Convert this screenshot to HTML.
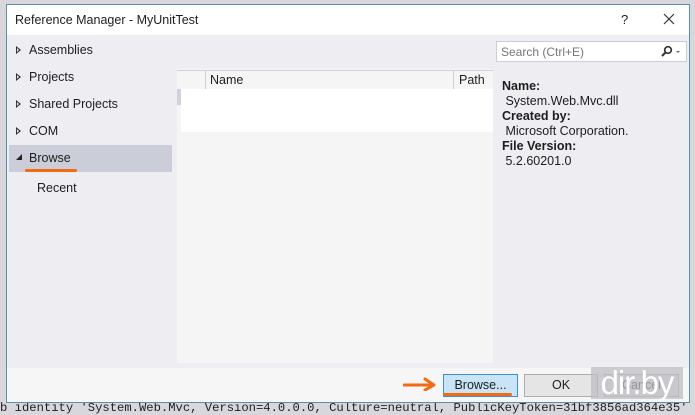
<!DOCTYPE html>
<html><head><style>
*{margin:0;padding:0;box-sizing:border-box}
body{width:695px;height:407px;overflow:hidden;background:#d8d8dc;font-family:"Liberation Sans",sans-serif;font-size:12px;color:#1e1e1e;position:relative}
.abs{position:absolute}
#dlg{left:6px;top:4px;width:684px;height:399px;border:1px solid #5b8fae;background:#ededf2}
#title{left:0;top:0;width:682px;height:30px;background:#fff}
.nav{left:22px;font-size:12.5px}
.tri{position:absolute;left:-13px;top:3px;width:0;height:0;border-top:4px solid transparent;border-bottom:4px solid transparent;border-left:5px solid #333}
.tri:after{content:"";position:absolute;left:-4px;top:-2px;border-top:2px solid transparent;border-bottom:2px solid transparent;border-left:2.5px solid #ededf2}
</style></head><body>
<div class="abs" style="left:0;top:401px;font-family:'Liberation Mono',monospace;font-size:12.2px;white-space:nowrap;line-height:14px">b identity 'System.Web.Mvc, Version=4.0.0.0, Culture=neutral, PublicKeyToken=31bf3856ad364e35'</div>
<div id="dlg" class="abs">
 <div id="title" class="abs"></div>
 <div class="abs" style="left:8px;top:8px;font-size:12.5px">Reference Manager - MyUnitTest</div>
 <div class="abs" style="left:614px;top:7px;font-size:13px">?</div>
 <svg class="abs" style="left:656px;top:8px" width="12" height="12"><path d="M1 1L11 11M11 1L1 11" stroke="#333" stroke-width="1.2"/></svg>
 <div class="abs nav" style="top:38px"><span class="tri"></span>Assemblies</div>
 <div class="abs nav" style="top:65px"><span class="tri"></span>Projects</div>
 <div class="abs nav" style="top:92px"><span class="tri"></span>Shared Projects</div>
 <div class="abs nav" style="top:119px"><span class="tri"></span>COM</div>
 <div class="abs" style="left:2px;top:140px;width:163px;height:27px;background:#cbcdd8"></div>
 <div class="abs nav" style="top:146px"><span style="position:absolute;left:-13px;top:3px;width:0;height:0;border-left:6px solid transparent;border-bottom:6px solid #222"></span>Browse</div>
 <div class="abs" style="left:18px;top:164px;width:52px;height:3px;background:#f26a13;border-radius:2px"></div>
 <div class="abs nav" style="left:30px;top:176px">Recent</div>
 <div class="abs" style="left:170px;top:64px;width:316px;height:294px;background:#f5f5f6"></div>
 <div class="abs" style="left:170px;top:65px;width:316px;height:19px;border-top:1px solid #d0d0d6;background:#f5f5f6"></div>
 <div class="abs" style="left:198px;top:65px;width:1px;height:19px;background:#d0d0d6"></div>
 <div class="abs" style="left:446px;top:65px;width:1px;height:19px;background:#d0d0d6"></div>
 <div class="abs" style="left:203px;top:68px;font-size:12.5px">Name</div>
 <div class="abs" style="left:452px;top:68px;font-size:12.5px">Path</div>
 <div class="abs" style="left:170px;top:84px;width:4px;height:16px;background:#d0d2dc"></div>
 <div class="abs" style="left:174px;top:84px;width:312px;height:43px;background:#fff"></div>
 <div class="abs" style="left:489px;top:36px;width:191px;height:21px;background:#fff;border:1px solid #ccced6"></div>
 <div class="abs" style="left:494px;top:40px;color:#777;font-size:12px">Search (Ctrl+E)</div>
 <svg class="abs" style="left:653px;top:40px" width="24" height="14"><circle cx="8" cy="5" r="3.3" fill="none" stroke="#333" stroke-width="1.7"/><path d="M6 7L2 11" stroke="#333" stroke-width="2"/><path d="M16 6h4l-2 2z" fill="#666"/></svg>
 <div class="abs" style="left:495px;top:74px;font-size:12.5px;line-height:15px">
  <b>Name:</b><br>&nbsp;System.Web.Mvc.dll<br><b>Created by:</b><br>&nbsp;Microsoft Corporation.<br><b>File Version:</b><br>&nbsp;5.2.60201.0</div>
 <div class="abs" style="left:0;top:363px;width:682px;height:34px;background:#f6f6f6"></div>
 <svg class="abs" style="left:396px;top:372px" width="34" height="14"><path d="M1 8H30M22 2L31 8L22 13" fill="none" stroke="#f26a13" stroke-width="3" stroke-linecap="round" stroke-linejoin="round"/></svg>
 <div class="abs" style="left:436px;top:369px;width:75px;height:23px;background:#c9e4f7;border:1px solid #3c8fd0;text-align:center;line-height:21px;font-size:12.5px">Browse...</div>
 <div class="abs" style="left:436px;top:388px;width:69px;height:3px;background:#f26a13;border-radius:2px"></div>
 <div class="abs" style="left:517px;top:369px;width:74px;height:23px;background:#e5e5e5;border:1px solid #adadad;text-align:center;line-height:21px;font-size:12.5px">OK</div>
 <div class="abs" style="left:597px;top:369px;width:75px;height:23px;background:#e5e5e5;border:1px solid #adadad;text-align:center;line-height:21px;font-size:12.5px">Cancel</div>
 <div class="abs" style="left:584px;top:362px;width:92px;height:32px;background:rgba(190,190,195,0.75);color:#fff;font-size:33px;line-height:32px;text-align:center;letter-spacing:-1px">dir.by</div>
</div>
</body></html>
